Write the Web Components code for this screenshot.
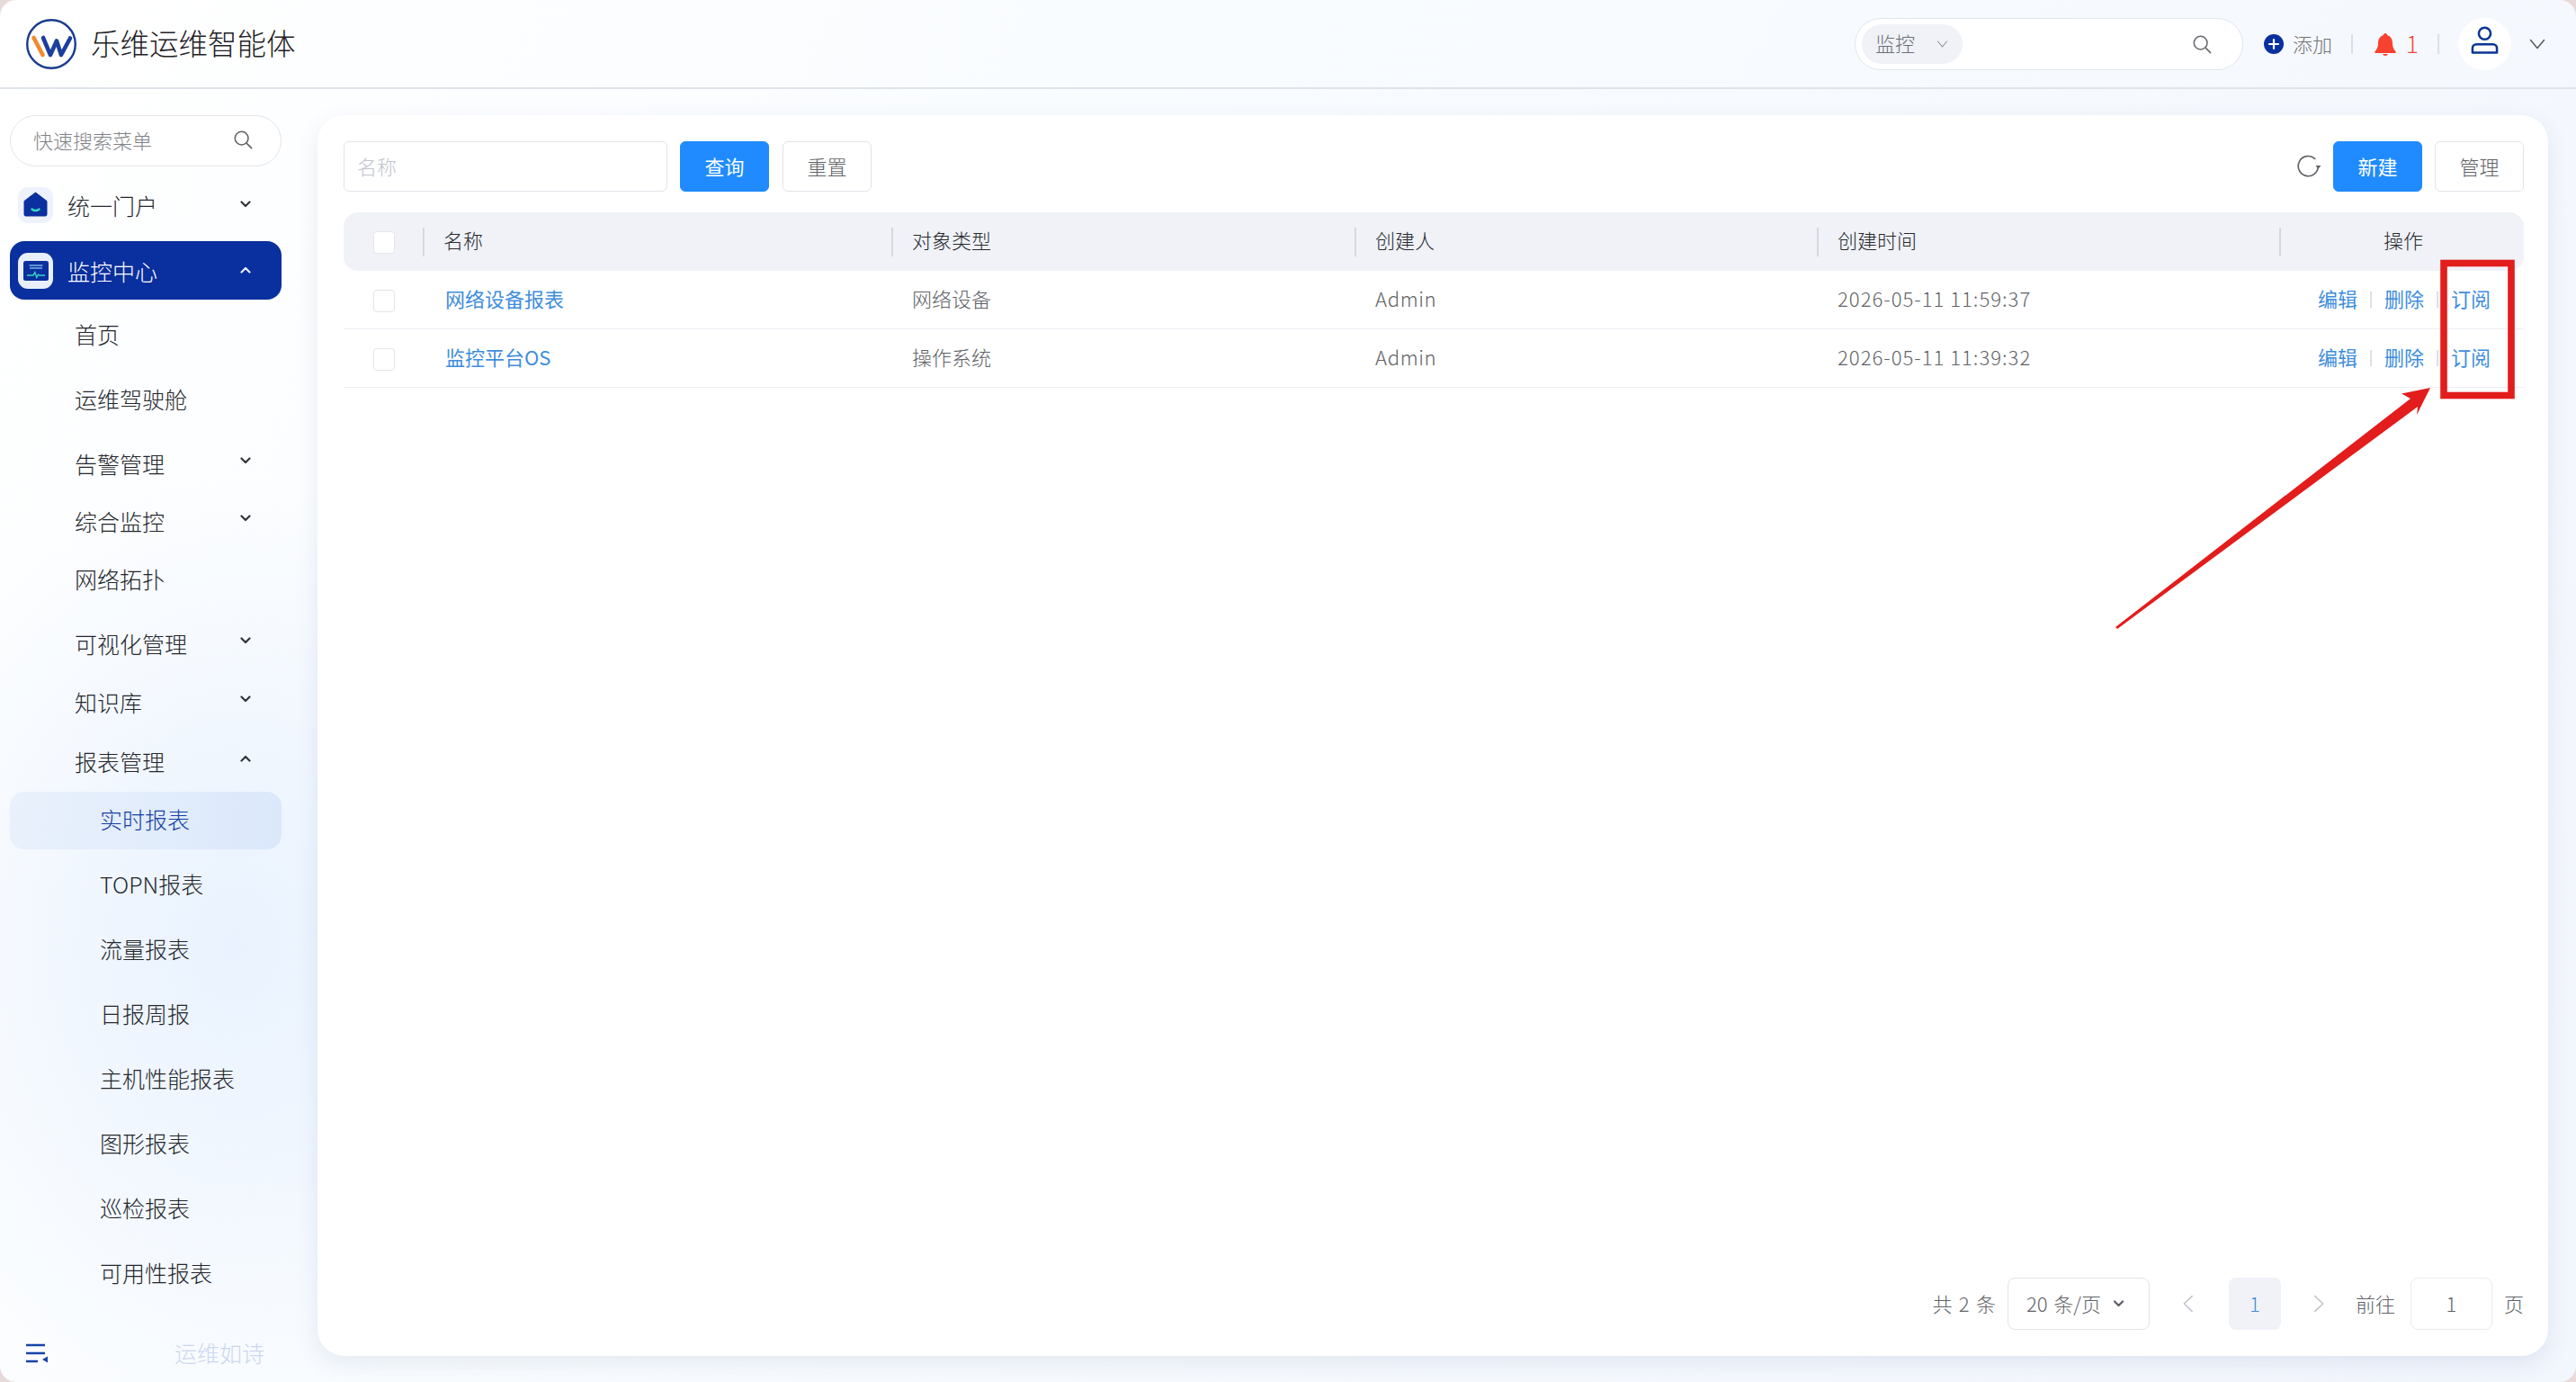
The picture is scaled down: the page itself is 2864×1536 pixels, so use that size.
<!DOCTYPE html>
<html lang="zh-CN">
<head>
<meta charset="utf-8">
<title>乐维运维智能体</title>
<style>
html,body{margin:0;padding:0;width:2864px;height:1536px;overflow:hidden;background:#e8dad8;font-family:"Noto Sans CJK SC","Noto Sans",sans-serif;}
</style>
</head>
<body>
<app-window>
  <top-bar slot="top"></top-bar>
  <side-nav slot="side">
    <nav-search>快速搜索菜单</nav-search>
    <nav-item icon="home" caret="down" level="0">统一门户</nav-item>
    <nav-item icon="monitor" caret="up" level="0" active>监控中心</nav-item>
    <nav-item level="1" gap>首页</nav-item>
    <nav-item level="1" gap>运维驾驶舱</nav-item>
    <nav-item level="1" caret="down">告警管理</nav-item>
    <nav-item level="1" caret="down">综合监控</nav-item>
    <nav-item level="1" gap>网络拓扑</nav-item>
    <nav-item level="1" caret="down">可视化管理</nav-item>
    <nav-item level="1" caret="down" nudge>知识库</nav-item>
    <nav-item level="1" caret="up" tight>报表管理</nav-item>
    <nav-item level="2" gap current>实时报表</nav-item>
    <nav-item level="2" gap>TOPN报表</nav-item>
    <nav-item level="2" gap>流量报表</nav-item>
    <nav-item level="2" gap>日报周报</nav-item>
    <nav-item level="2" gap>主机性能报表</nav-item>
    <nav-item level="2" gap>图形报表</nav-item>
    <nav-item level="2" gap>巡检报表</nav-item>
    <nav-item level="2" gap>可用性报表</nav-item>
    <nav-foot>运维如诗</nav-foot>
  </side-nav>
  <report-card slot="main">
    <card-toolbar slot="toolbar"></card-toolbar>
    <report-table slot="table"></report-table>
    <table-pager slot="pager"></table-pager>
  </report-card>
  <callout-mark slot="over"></callout-mark>
</app-window>

<script>
const ICONS = {
  search:'<svg viewBox="0 0 24 24" fill="none" stroke="currentColor" stroke-width="1.7" stroke-linecap="round"><circle cx="10.5" cy="10.5" r="8"/><path d="M16.5 16.5l6 6"/></svg>',
  down:'<svg viewBox="0 0 12 8" fill="none" stroke="currentColor" stroke-width="2.2" stroke-linecap="round" stroke-linejoin="round"><path d="M1.5 1.5 6 6l4.5-4.5"/></svg>',
  up:'<svg viewBox="0 0 12 8" fill="none" stroke="currentColor" stroke-width="2.2" stroke-linecap="round" stroke-linejoin="round"><path d="M1.5 6.5 6 2l4.5 4.5"/></svg>',
  thinDown:'<svg viewBox="0 0 18 12" fill="none" stroke="currentColor" stroke-width="1.6" stroke-linecap="round" stroke-linejoin="round"><path d="M1.5 1.5 9 10.5l7.5-9"/></svg>',
  left:'<svg viewBox="0 0 14 22" fill="none" stroke="currentColor" stroke-width="1.7" stroke-linecap="round" stroke-linejoin="round"><path d="M12 2 2.5 11 12 20"/></svg>',
  right:'<svg viewBox="0 0 14 22" fill="none" stroke="currentColor" stroke-width="1.7" stroke-linecap="round" stroke-linejoin="round"><path d="M2 2l9.5 9L2 20"/></svg>',
  home:'<svg viewBox="0 0 40 40"><path d="M7 15.5 19.5 6 32 15.5V30.5a1.5 1.5 0 0 1-1.5 1.5h-22A1.5 1.5 0 0 1 7 30.5z" fill="#0a2f9e" stroke="#0a2f9e" stroke-linejoin="round"/><path d="M15.5 24.5c2.5 2 5.5 2 8 0" fill="none" stroke="#35d8c4" stroke-width="2.4" stroke-linecap="round"/></svg>',
  monitor:'<svg viewBox="0 0 40 40"><rect x="6" y="9" width="28" height="22" rx="2.5" fill="#0a2f9e"/><path d="M12.5 14h15M13 17h14" stroke="#7fb2e6" stroke-width="1.3"/><path d="M10 25h7l1.8-3.5 2 6 1.6-3.5 1.2 1H30" fill="none" stroke="#35d8c4" stroke-width="1.3"/></svg>',
  logo:'<svg viewBox="0 0 56 58"><circle cx="28" cy="29" r="26.8" fill="none" stroke="#1a3c8e" stroke-width="2.4"/><path d="M8.5 22 18.5 41" stroke="#f08a2c" stroke-width="4.6" stroke-linecap="round"/><path d="M19 22 27 41l7-15.5L39 41 49 22.5" fill="none" stroke="#1c3f9d" stroke-width="4.6" stroke-linecap="round" stroke-linejoin="round"/></svg>',
  plus:'<svg viewBox="0 0 22 22"><circle cx="11" cy="11" r="11" fill="#0a2f9e"/><path d="M11 6v10M6 11h10" stroke="#fff" stroke-width="2.2" stroke-linecap="round"/></svg>',
  bell:'<svg viewBox="0 0 26 26"><path d="M13 1c1.3 0 2.2 1 2.3 2.2C19.3 4.4 21 8 21 12c0 4 1 6.5 3.5 9.2.6.7.2 1.8-.8 1.8H2.3c-1 0-1.4-1.1-.8-1.8C4 18.5 5 16 5 12c0-4 1.7-7.6 5.7-8.8C10.8 2 11.7 1 13 1z" fill="#f9412f"/><path d="M10 24h6c-.5 1.3-1.6 2-3 2s-2.5-.7-3-2z" fill="#f9412f"/></svg>',
  user:'<svg viewBox="0 0 32 32" fill="none" stroke="#0a3596" stroke-width="2.6"><circle cx="16" cy="8.5" r="6.8"/><path d="M2 30.5v-5.2c0-2.5 2-4.3 4.5-4.3h19c2.5 0 4.5 1.8 4.5 4.3v5.2z" stroke-linejoin="round"/></svg>',
  refresh:'<svg viewBox="0 0 28 28" fill="none" stroke="#5f6368" stroke-width="1.7" stroke-linecap="round"><path d="M21.5 4.5A11.5 11.5 0 1 0 25.3 13"/><path d="M22.3 12.5h6l-3 4z" fill="#5f6368" stroke="none"/></svg>',
  fold:'<svg viewBox="0 0 24 22"><path d="M0 2h21M0 11h21M0 20h13" stroke="#1644a8" stroke-width="2.7"/><path d="M24 14.5v7l-6-3.5z" fill="#1644a8"/></svg>'
};

function shadow(host, html){
  const t = document.createElement('template');
  t.innerHTML = html;
  host.attachShadow({mode:'open'}).appendChild(t.content.cloneNode(true));
}
const FONT = '"Noto Sans CJK SC","Noto Sans",sans-serif';

class AppIcon extends HTMLElement{
  connectedCallback(){
    if(this.shadowRoot) return;
    const n = this.getAttribute('name');
    shadow(this,`<style>:host{display:inline-flex;flex:none;line-height:0}svg{width:100%;height:100%;display:block}</style>${ICONS[n]||''}`);
  }
}
customElements.define('app-icon',AppIcon);

class AppWindow extends HTMLElement{
  constructor(){super();shadow(this,`<style>
    :host{display:grid;position:relative;width:2864px;height:1536px;grid-template-rows:99px 1fr;grid-template-columns:353px 1fr;border-radius:18px;overflow:hidden;
      background:radial-gradient(420px 520px at 260px 1050px,#e9f2fe 0%,rgba(233,242,254,0) 100%),linear-gradient(120deg,#ffffff 0%,#f9fcff 35%,#f2f6fd 100%);font-family:${FONT};font-weight:300;}
    .top{grid-column:1/3}
    .side{min-height:0;display:flex}
    .main{min-height:0;display:flex;padding:29px 31px 29px 0}
  </style>
  <div class="top"><slot name="top"></slot></div>
  <div class="side"><slot name="side"></slot></div>
  <div class="main"><slot name="main"></slot></div>
  <slot name="over"></slot>`);}
}
customElements.define('app-window',AppWindow);

class TopBar extends HTMLElement{
  constructor(){super();shadow(this,`<style>
    :host{display:flex;align-items:center;height:99px;box-sizing:border-box;border-bottom:2px solid #dfe3ea;padding:0 34px 0 29px;color:#2b2f36}
    .logo{width:56px;height:58px;margin-right:16px}
    h1{margin:0 0 3px;font-size:32.5px;font-weight:inherit;line-height:1;color:#1f2227}
    .sp{flex:1}
    .search{display:flex;align-items:center;width:432px;height:58px;box-sizing:border-box;border:1.5px solid #e2e5ea;border-radius:29px;background:#fff;padding:0 34px 0 7px}
    .kind{display:flex;align-items:center;width:112px;height:44px;border-radius:22px;background:#f0f2f7;color:#6b6e74;font-size:22px;padding:0 0 3px 15px;box-sizing:border-box}
    .kind app-icon{width:13px;height:8px;margin-left:24px;color:#8a8d93;position:relative;top:2px}
    .search>app-icon{width:22px;height:22px;margin-left:auto;color:#66696e}
    .add{display:flex;align-items:center;margin-left:23px;color:#6f7277;font-size:22px}
    .add span{position:relative;top:-1px}
    .add app-icon{width:22px;height:22px;margin-right:10px}
    .div{width:2px;height:22px;background:#dcdfe5;margin:0 23px 0 21px}
    .bell{display:flex;align-items:center;color:#f0483e;font-size:26px}
    .bell span{position:relative;top:-1px}
    .bell app-icon{width:26px;height:26px;margin-right:10px}
    .avatar{width:59px;height:58px;border-radius:50%;background:#fff;display:flex;align-items:center;justify-content:center}
    .avatar app-icon{width:31px;height:31px;position:relative;top:-4px}
    .more{width:18px;height:12px;margin-left:20px;color:#5c5f65}
  </style>
  <app-icon class="logo" name="logo"></app-icon><h1>乐维运维智能体</h1><div class="sp"></div>
  <div class="search"><div class="kind">监控<app-icon name="thinDown"></app-icon></div><app-icon name="search"></app-icon></div>
  <div class="add"><app-icon name="plus"></app-icon><span>添加</span></div><div class="div"></div>
  <div class="bell"><app-icon name="bell"></app-icon><span>1</span></div><div class="div" style="margin-right:21px"></div>
  <div class="avatar"><app-icon name="user"></app-icon></div><app-icon class="more" name="thinDown"></app-icon>`);}
}
customElements.define('top-bar',TopBar);

class SideNav extends HTMLElement{
  constructor(){super();shadow(this,`<style>
    :host{display:flex;flex-direction:column;width:353px;box-sizing:border-box;padding:29px 40px 0 11px;height:100%}
  </style><slot></slot>`);}
}
customElements.define('side-nav',SideNav);

class NavSearch extends HTMLElement{
  constructor(){super();shadow(this,`<style>
    :host{display:flex;align-items:center;flex:none;height:57px;box-sizing:border-box;border:1.5px solid #e2e5ea;border-radius:29px;background:#fff;padding:0 31px 0 25px;margin-bottom:11px;color:#7f8287;font-size:22px}
    span{padding-bottom:3px}
    app-icon{width:22px;height:22px;margin-left:auto;color:#5f6368;position:relative;top:-2px}
  </style><span><slot></slot></span><app-icon name="search"></app-icon>`);}
}
customElements.define('nav-search',NavSearch);

class NavItem extends HTMLElement{
  connectedCallback(){
    if(this.shadowRoot) return;
    const icon=this.getAttribute('icon'),caret=this.getAttribute('caret');
    const box = icon?`<span class="ib"><app-icon name="${icon}"></app-icon></span>`:'';
    const car = caret?`<app-icon class="car" name="${caret}"></app-icon>`:'';
    shadow(this,`<style>
      :host{display:flex;align-items:center;flex:none;height:64px;box-sizing:border-box;border-radius:16px;color:#24272d;font-size:25px;padding-left:72px}
      :host([level="0"]){padding-left:9px;margin-bottom:8px}
      :host([level="0"][active]){height:65px;background:#0a2f9e;color:#fff}
      :host([level="2"]){padding-left:100px}
      :host([gap]){margin-bottom:8px}
      :host([nudge]){margin-top:1px}
      :host([tight]){margin-top:2px;margin-bottom:0}
      :host([current]){color:#1440a5;background:linear-gradient(100deg,#e9f1fc 0%,#dbe8fb 100%)}
      .t{padding-bottom:4px}
      :host([level="0"]) .t{padding-bottom:0}
      .ib{width:39px;height:40px;border-radius:11px;background:#eef2fc;margin-right:16px;display:flex;align-items:center;justify-content:center;flex:none}
      :host([active]) .ib{background:#e9eefb}
      .ib app-icon{width:40px;height:40px}
      .car{width:12px;height:8px;margin-left:auto;margin-right:34px;position:relative;top:-5px;color:#33363c}
      :host([level="0"]) .car{top:-1px}
      :host([active]) .car{color:#e9eefb}
    </style>${box}<span class="t"><slot></slot></span>${car}`);
  }
}
customElements.define('nav-item',NavItem);

class NavFoot extends HTMLElement{
  constructor(){super();shadow(this,`<style>
    :host{display:flex;align-items:center;flex:none;margin-top:auto;height:40px;margin-bottom:12px;padding-left:18px;color:#cbd7ee;font-size:25px}
    span{padding-bottom:3px}
    app-icon{width:24px;height:22px;margin-right:141px}
  </style><app-icon name="fold"></app-icon><span><slot></slot></span>`);}
}
customElements.define('nav-foot',NavFoot);

class ReportCard extends HTMLElement{
  constructor(){super();shadow(this,`<style>
    :host{display:flex;flex-direction:column;flex:1;min-width:0;box-sizing:border-box;background:#fff;border-radius:30px;padding:29px 27px 29px 29px;box-shadow:0 8px 26px rgba(50,75,125,.10)}
    .pg{margin-top:auto}
  </style><slot name="toolbar"></slot><slot name="table"></slot><div class="pg"><slot name="pager"></slot></div>`);}
}
customElements.define('report-card',ReportCard);

class UiButton extends HTMLElement{
  constructor(){super();shadow(this,`<style>
    :host{display:inline-flex;align-items:center;justify-content:center;flex:none;width:99px;height:56px;box-sizing:border-box;border:1.5px solid #e2e4e9;border-radius:6px;background:#fff;color:#606266;font-size:22px;padding-bottom:3px}
    :host([primary]){background:#1f8bff;border-color:#1f8bff;color:#fff;font-weight:400}
  </style><slot></slot>`);}
}
customElements.define('ui-button',UiButton);

class CardToolbar extends HTMLElement{
  constructor(){super();shadow(this,`<style>
    :host{display:flex;align-items:center;height:56px;flex:none;margin-bottom:23px}
    .inp{width:360px;height:56px;box-sizing:border-box;border:1.5px solid #e2e4e9;border-radius:6px;color:#c0c4cc;font-size:22px;display:flex;align-items:center;padding:0 0 3px 14px;margin-right:14px}
    ui-button+ui-button{margin-left:15px}
    .sp{flex:1}
    app-icon{width:27px;height:27px;margin-right:14px}
  </style><div class="inp">名称</div><ui-button primary>查询</ui-button><ui-button>重置</ui-button><div class="sp"></div>
  <app-icon name="refresh"></app-icon><ui-button primary>新建</ui-button><ui-button style="margin-left:14px">管理</ui-button>`);}
}
customElements.define('card-toolbar',CardToolbar);

class ReportTable extends HTMLElement{
  constructor(){super();
    const rows=[['网络设备报表','网络设备','Admin','2026-05-11 11:59:37'],['监控平台OS','操作系统','Admin','2026-05-11 11:39:32']];
    const head=['名称','对象类型','创建人','创建时间'];
    const box='<span class="box"></span>';
    let h=`<div class="c chk">${box}</div>`+head.map(t=>`<div class="c"><i class="sep"></i>${t}</div>`).join('')+`<div class="c act"><i class="sep"></i><span class="mid">操作</span></div>`;
    let b=rows.map(r=>`<div class="row"><div class="c chk">${box}</div><div class="c p n"><a>${r[0]}</a></div><div class="c p g">${r[1]}</div><div class="c p g ad">${r[2]}</div><div class="c p g dt">${r[3]}</div><div class="c ops"><a>编辑</a><i></i><a>删除</a><i></i><a>订阅</a></div></div>`).join('');
    shadow(this,`<style>
    :host{display:block;flex:none;font-size:22px;color:#26292e}
    .row,.head{display:grid;grid-template-columns:88px 521px 515px 514px 514px 272px}
    .head{height:65px;background:#f0f2f8;border-radius:16px}
    .row{height:64px;border-bottom:1.5px solid #eceef3;box-sizing:content-box}
    .row:first-of-type{height:63.5px}
    .c{display:flex;align-items:center;min-width:0;position:relative;padding-bottom:4px;box-sizing:border-box}
    .head .c{padding-bottom:5px}
    .sep{display:block;width:2px;height:32px;background:#d6d8de;margin-right:21px;flex:none;position:relative;top:2.5px}
    .c.chk{padding:0 0 0 33px}
    .box{display:block;width:24px;height:25px;box-sizing:border-box;border:1.5px solid #e3e5ea;border-radius:4px;background:#fff;margin-top:2px}
    .p{padding-left:23px}
    .n{padding-left:25px}
    .g{color:#606266}
    a{color:#3e8ddd;text-decoration:none;font-weight:400}
    .ad{letter-spacing:.7px}
    .dt{letter-spacing:1.05px}
    .mid{position:absolute;left:4px;right:0;text-align:center}
    .ops{padding-left:43px}
    .ops i{display:block;width:2px;height:18px;background:#dcdfe5;margin:0 14px;position:relative;top:2px}
    </style><div class="head">${h}</div>${b}`);}
}
customElements.define('report-table',ReportTable);

class TablePager extends HTMLElement{
  constructor(){super();shadow(this,`<style>
    :host{display:flex;align-items:center;justify-content:flex-end;height:58px;font-size:22px;color:#606266;padding-right:0}
    .tx{padding-bottom:3px}
    .ws{word-spacing:2.5px}
    .sel{display:flex;align-items:center;width:158px;height:58px;box-sizing:border-box;border:1.5px solid #e2e4e9;border-radius:8px;padding-left:20px;margin:0 14px 0 13px}
    .sel .tx{word-spacing:2px}
    .sel app-icon{width:13px;height:8px;margin-left:13px;color:#5c5f65;position:relative;top:0}
    .nav{width:58px;height:58px;display:flex;align-items:center;justify-content:center;color:#c0c4cc}
    .nav app-icon{width:13px;height:22px}
    .pg{width:58px;height:58px;border-radius:8px;background:#f0f2f8;color:#3e8ddd;display:flex;align-items:center;justify-content:center;margin:0 14px 0 16px}
    .go{margin-left:11px}
    .inp{width:91px;height:58px;box-sizing:border-box;border:1.5px solid #e9ebef;border-radius:8px;display:flex;align-items:center;justify-content:center;margin:0 13px 0 17px}
  </style><span class="tx ws">共 2 条</span><div class="sel"><span class="tx">20 条/页</span><app-icon name="down"></app-icon></div>
  <div class="nav"><app-icon name="left"></app-icon></div><div class="pg"><span class="tx">1</span></div><div class="nav"><app-icon name="right"></app-icon></div>
  <span class="go tx">前往</span><div class="inp"><span class="tx">1</span></div><span class="tx">页</span>`);}
}
customElements.define('table-pager',TablePager);

class CalloutMark extends HTMLElement{
  constructor(){super();shadow(this,`<style>
    :host{position:absolute;left:0;top:0;width:2864px;height:1536px;pointer-events:none;display:block}
    svg{display:block;width:100%;height:100%}
  </style><svg viewBox="0 0 2864 1536">
    <rect x="2717" y="292.5" width="75" height="147" fill="none" stroke="#e31c1c" stroke-width="7.6"/>
    <polygon points="2702,431 2670,437.5 2680,443 2352,697 2354,699 2688,452 2687,461" fill="#e31c1c"/>
  </svg>`);}
}
customElements.define('callout-mark',CalloutMark);
</script>
</body>
</html>
